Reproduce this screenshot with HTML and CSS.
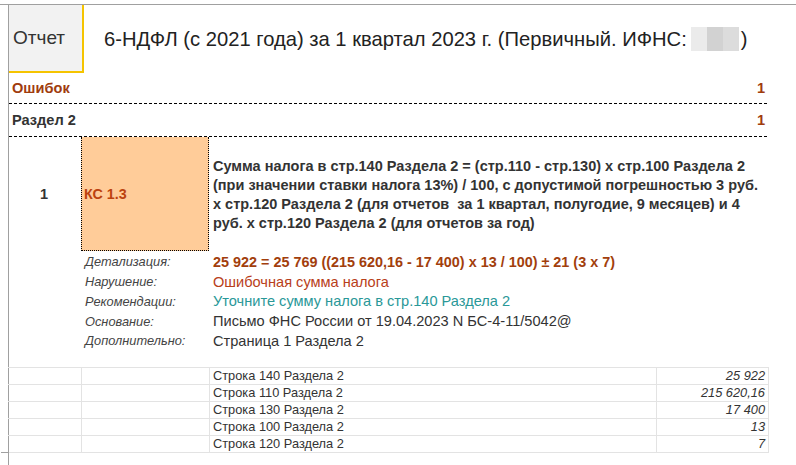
FILE: index.html
```
<!DOCTYPE html>
<html lang="ru">
<head>
<meta charset="utf-8">
<link rel="stylesheet" href="styles.css">
</head>
<body>
<div class="page">
  <div class="frame">
    <div class="header">
      <div class="tab">Отчет</div>
      <div class="title">6-НДФЛ (с 2021 года) за 1 квартал 2023 г. (Первичный. ИФНС:<span class="blur"><span class="b1"></span><span class="b2"></span><span class="b3"></span></span>)</div>
    </div>
    <div class="main">
      <div class="sumrow errors"><span>Ошибок</span><span>1</span></div>
      <div class="dash"></div>
      <div class="sumrow section"><span>Раздел 2</span><span class="num">1</span></div>
      <div class="dash"></div>
      <div class="item">
        <div class="idx">1</div>
        <div class="code">КС 1.3</div>
        <div class="desc">Сумма налога в стр.140 Раздела 2 = (стр.110 - стр.130) х стр.100 Раздела 2 (при значении ставки налога 13%) / 100, с допустимой погрешностью 3 руб. х стр.120 Раздела 2 (для отчетов&nbsp; за 1 квартал, полугодие, 9 месяцев) и 4 руб. х стр.120 Раздела 2 (для отчетов за год)</div>
      </div>
      <div class="details">
        <div class="lbl">Детализация:</div><div class="val v-detail">25 922 = 25 769 ((215 620,16 - 17 400) х 13 / 100) ± 21 (3 х 7)</div>
        <div class="lbl">Нарушение:</div><div class="val v-err">Ошибочная сумма налога</div>
        <div class="lbl">Рекомендации:</div><div class="val v-rec">Уточните сумму налога в стр.140 Раздела 2</div>
        <div class="lbl">Основание:</div><div class="val">Письмо ФНС России от 19.04.2023 N БС-4-11/5042@</div>
        <div class="lbl">Дополнительно:</div><div class="val">Страница 1 Раздела 2</div>
      </div>
      <table class="lines">
        <tr><td class="c1"></td><td class="c2"></td><td class="c3">Строка 140 Раздела 2</td><td class="c4">25 922</td></tr>
        <tr><td class="c1"></td><td class="c2"></td><td class="c3">Строка 110 Раздела 2</td><td class="c4">215 620,16</td></tr>
        <tr><td class="c1"></td><td class="c2"></td><td class="c3">Строка 130 Раздела 2</td><td class="c4">17 400</td></tr>
        <tr><td class="c1"></td><td class="c2"></td><td class="c3">Строка 100 Раздела 2</td><td class="c4">13</td></tr>
        <tr><td class="c1"></td><td class="c2"></td><td class="c3">Строка 120 Раздела 2</td><td class="c4">7</td></tr>
      </table>
    </div>
  </div>
</div>
</body>
</html>
```
FILE: styles.css
```
html, body {
  margin: 0;
  padding: 0;
  background: #fff;
  font-family: "Liberation Sans", Arial, sans-serif;
  color: #333;
}
.page {
  padding-top: 4px;
  height: 461px;
  overflow: hidden;
}
.frame {
  border-top: 1px solid #a0a0a0;
  margin: 0;
  padding-left: 8px;
  height: 460px;
  position: relative;
}
.frame::before {
  content: "";
  position: absolute;
  left: 8px;
  top: 0;
  bottom: 0;
  width: 1px;
  background: #a0a0a0;
}
.header {
  display: flex;
  align-items: center;
  padding-left: 1px;
}
.tab {
  height: 66px;
  background: #f2f2f2;
  border-right: 2px solid #f5c400;
  border-bottom: 2px solid #f5c400;
  display: flex;
  align-items: center;
  padding-left: 4px;
  box-sizing: content-box;
  width: 69px;
  font-size: 19px;
  color: #333;
}
.title {
  margin-left: 20px;
  font-size: 20.2px;
  color: #222;
  display: flex;
  align-items: center;
  white-space: nowrap;
}
.blur {
  display: inline-flex;
  width: 48px;
  height: 24px;
  margin-left: 4px;
  margin-right: 2px;
  background: #e4e4e4;
}
.blur .b1 { width: 16px; background: #ebebeb; }
.blur .b2 { width: 16px; background: #d2d2d2; }
.blur .b3 { width: 16px; background: #dcdcdc; }
.main {
  width: 760px;
  padding-left: 1px;
}
.sumrow {
  display: flex;
  justify-content: space-between;
  align-items: center;
  height: 31px;
  padding: 0 4px 0 3px;
  font-size: 14.6px;
  font-weight: bold;
}
.errors { color: #a03c0e; height: 30px; }
.section { color: #333; height: 32px; }
.section .num { color: #a03c0e; }
.dash {
  height: 1px;
  background-image: repeating-linear-gradient(to right, #000 0 3px, transparent 3px 5px);
}
.item {
  display: grid;
  grid-template-columns: 72px 128px 1fr;
  height: 114px;
  align-items: center;
}
.idx {
  text-align: center;
  font-size: 14.5px;
  font-weight: bold;
  padding-right: 2px;
}
.code {
  align-self: stretch;
  background: #ffcc99;
  border: 1px dotted #000;
  border-top: none;
  display: flex;
  align-items: center;
  padding-left: 2px;
  font-size: 14.3px;
  font-weight: bold;
  color: #bc420e;
}
.desc {
  padding: 2px 8px 0 4px;
  font-size: 14.5px;
  font-weight: bold;
  line-height: 19px;
  color: #333;
}
.details {
  display: grid;
  grid-template-columns: 128px 1fr;
  margin-left: 72px;
  grid-auto-rows: 19.75px;
  align-items: center;
  padding-top: 1px;
  padding-bottom: 16px;
}
.lbl {
  padding-left: 4px;
  font-size: 12.8px;
  font-style: italic;
  color: #444;
}
.val {
  padding-left: 4px;
  font-size: 14.6px;
  color: #333;
  white-space: nowrap;
}
.v-detail { font-weight: bold; font-size: 14.4px; color: #a23e0c; }
.v-err { color: #b8401a; }
.v-rec { color: #2a9898; }
.lines {
  border-collapse: collapse;
  width: 761px;
  margin-left: -1px;
  font-size: 12.8px;
  position: relative;
}
.lines td {
  border: 1px solid #e3e3e3;
  height: 16px;
  padding: 0 3px;
  line-height: 15px;
}
.c1 { width: 66px; border-left-color: #a0a0a0 !important; }
.c2 { width: 121px; }
.c3 { width: 440px; }
.c4 { text-align: right; font-style: italic; }
.lines::after {
  content: "";
  position: absolute;
  left: -8px;
  bottom: 0;
  width: 8px;
  height: 1px;
  background: #a0a0a0;
}
```
